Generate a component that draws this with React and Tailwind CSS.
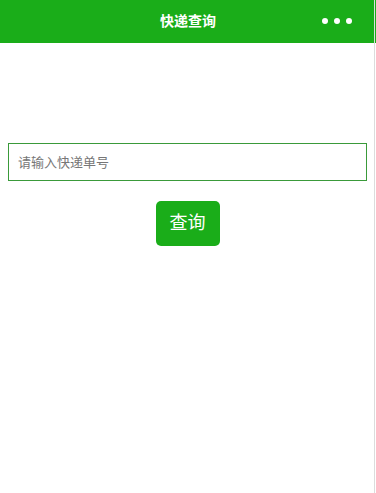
export default function App() {
  return (
    <div
      className="w-[376px] h-[493px] bg-white flex flex-col relative overflow-hidden"
      style={{ fontFamily: '"Liberation Sans", "Noto Sans CJK SC", sans-serif' }}
    >
      <header className="h-[43px] bg-[#1aad19] flex items-center justify-center relative shrink-0">
        <h1 className="text-white text-[14px] font-bold">快递查询</h1>
        <div className="absolute right-[24px] top-[18px] flex gap-[6px]">
          <span className="w-[6px] h-[6px] rounded-full bg-white" />
          <span className="w-[6px] h-[6px] rounded-full bg-white" />
          <span className="w-[6px] h-[6px] rounded-full bg-white" />
        </div>
      </header>

      <main className="flex flex-col items-center pt-[100px] px-[8px] pr-[9px]">
        <input
          type="text"
          placeholder="请输入快递单号"
          className="w-full h-[38px] border border-[#3a9a3a] px-[9px] text-[13px] text-[#333] placeholder:text-[#777] outline-none"
        />
        <button className="mt-[20px] w-[64px] h-[45px] rounded-[5px] bg-[#1aad19] text-white text-[18px]">
          查询
        </button>
      </main>

      <div className="absolute right-[1px] top-0 bottom-0 w-px bg-[#dcdcdc]" />
    </div>
  );
}
